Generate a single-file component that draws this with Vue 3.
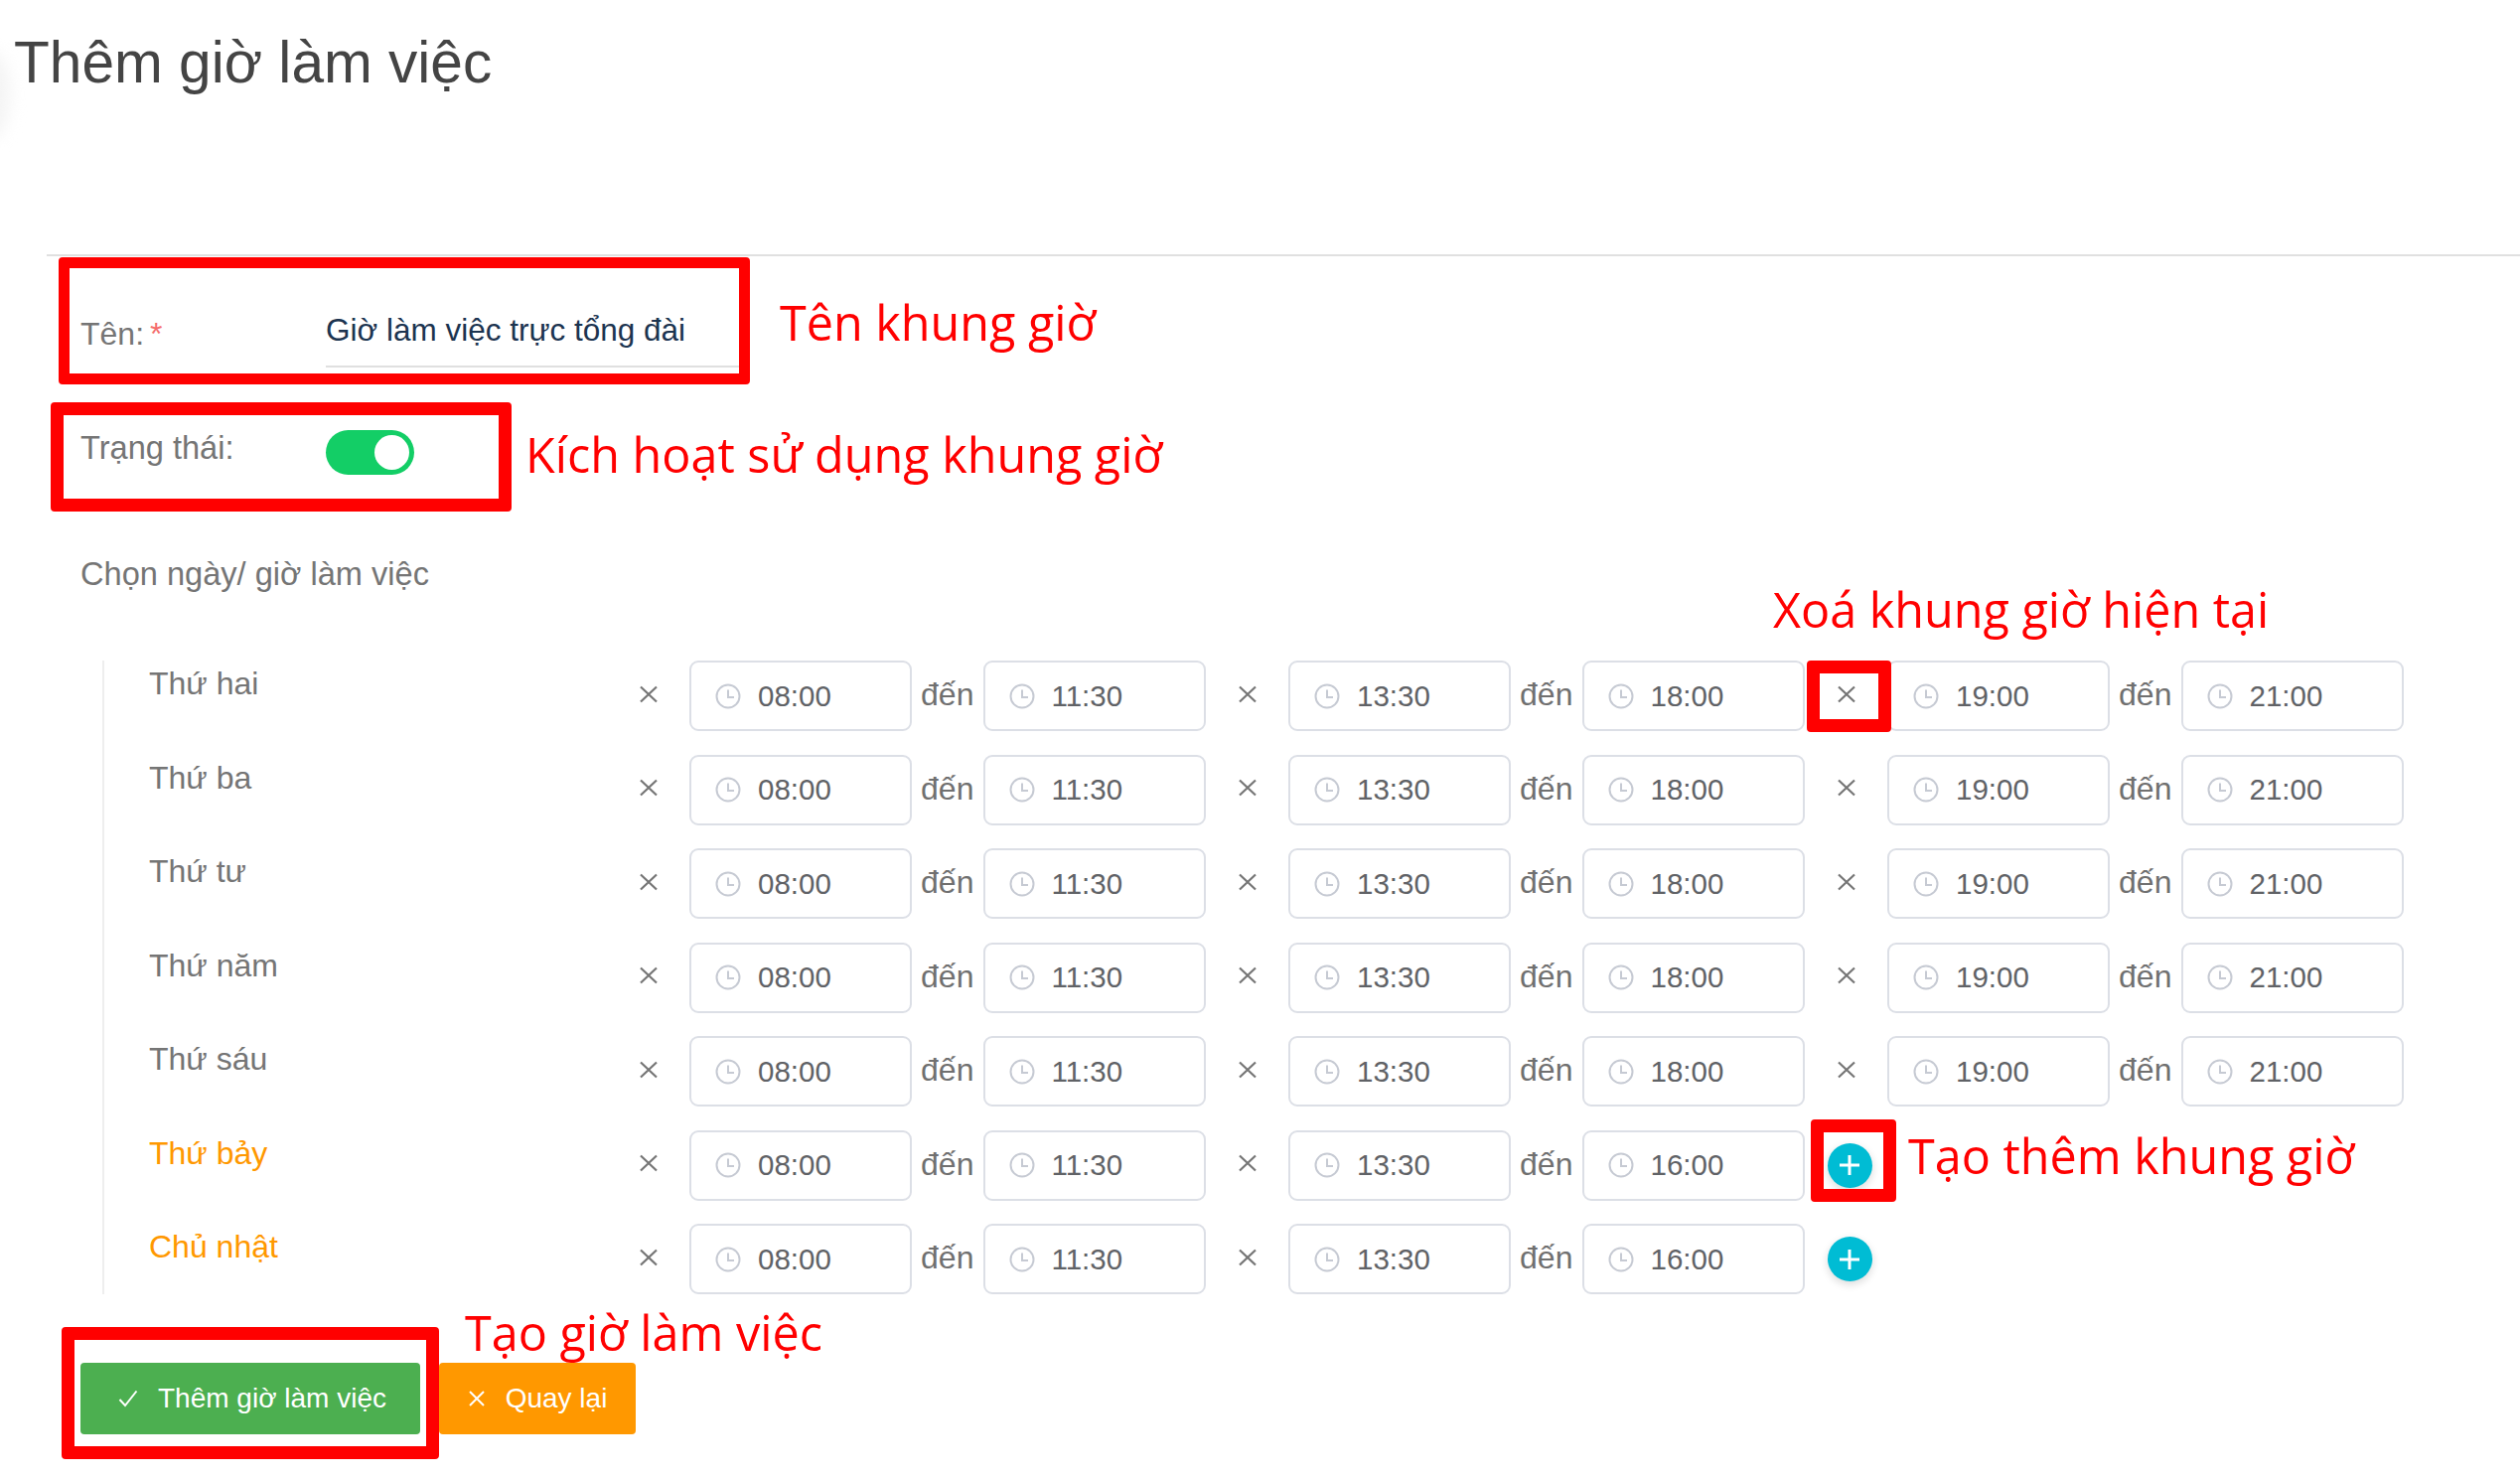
<script setup>
const morning = { from: "08:00", to: "11:30" };
const days = [
  { name: "Thứ hai", end: "18:00", evening: true },
  { name: "Thứ ba", end: "18:00", evening: true },
  { name: "Thứ tư", end: "18:00", evening: true },
  { name: "Thứ năm", end: "18:00", evening: true },
  { name: "Thứ sáu", end: "18:00", evening: true },
  { name: "Thứ bảy", end: "16:00", evening: false, weekend: true },
  { name: "Chủ nhật", end: "16:00", evening: false, weekend: true },
];

function slots(day) {
  const list = [morning, { from: "13:30", to: day.end }];
  if (day.evening) list.push({ from: "19:00", to: "21:00" });
  return list;
}
</script>

<template>
  <div class="page">
    <div class="edge-shade"></div>
    <h1 class="title">Thêm giờ làm việc</h1>
    <div class="divider"></div>

    <form class="form" @submit.prevent>
      <div class="name-row">
        <label class="name-label">Tên:<span class="req">*</span></label>
        <div class="name-input">Giờ làm việc trực tổng đài</div>
      </div>

      <div class="status-row">
        <label class="status-label">Trạng thái:</label>
        <span class="toggle"><span class="knob"></span></span>
      </div>

      <div class="section-label">Chọn ngày/ giờ làm việc</div>

      <div class="days">
        <div v-for="day in days" :key="day.name" class="day">
          <div class="day-name" :class="{ weekend: day.weekend }">{{ day.name }}</div>
          <div v-for="(slot, i) in slots(day)" :key="i" class="slot">
            <div class="remove">
              <svg width="20" height="18" viewBox="0 0 20 18"><path d="M2 1.5 18 16.5M18 1.5 2 16.5" fill="none" stroke="#757575" stroke-width="2.2" /></svg>
            </div>
            <div class="time">
              <svg class="clock" width="26" height="26" viewBox="0 0 26 26"><circle cx="13" cy="13" r="11.5" fill="none" stroke="#c6cad3" stroke-width="2" /><path d="M13 6.5V14H19" fill="none" stroke="#c6cad3" stroke-width="2" /></svg>
              <span>{{ slot.from }}</span>
            </div>
            <span class="to">đến</span>
            <div class="time">
              <svg class="clock" width="26" height="26" viewBox="0 0 26 26"><circle cx="13" cy="13" r="11.5" fill="none" stroke="#c6cad3" stroke-width="2" /><path d="M13 6.5V14H19" fill="none" stroke="#c6cad3" stroke-width="2" /></svg>
              <span>{{ slot.to }}</span>
            </div>
          </div>
          <div v-if="!day.evening" class="add-wrap">
            <button type="button" class="add" aria-label="Thêm">
              <svg width="22" height="22" viewBox="0 0 22 22"><path d="M11 1V21M1 11H21" fill="none" stroke="#fff" stroke-width="3" /></svg>
            </button>
          </div>
        </div>
      </div>

      <div class="actions">
        <button type="button" class="btn btn-green">
          <svg width="20" height="18" viewBox="0 0 20 18"><path d="M1.5 10 7 16 18.5 1.5" fill="none" stroke="#fff" stroke-width="2" /></svg>
          Thêm giờ làm việc
        </button>
        <button type="button" class="btn btn-orange">
          <svg width="18" height="18" viewBox="0 0 18 18"><path d="M2 2 16 16M16 2 2 16" fill="none" stroke="#fff" stroke-width="2" /></svg>
          Quay lại
        </button>
      </div>
    </form>

    <!-- red markup drawn on top of the screenshot -->
    <div class="frame f-name"></div>
    <div class="frame f-status"></div>
    <div class="frame f-remove"></div>
    <div class="frame f-add"></div>
    <div class="frame f-submit"></div>
    <div class="note n-name">Tên khung giờ</div>
    <div class="note n-status">Kích hoạt sử dụng khung giờ</div>
    <div class="note n-remove">Xoá khung giờ hiện tại</div>
    <div class="note n-add">Tạo thêm khung giờ</div>
    <div class="note n-submit">Tạo giờ làm việc</div>
  </div>
</template>

<style>
body {
  background: #fff;
}
</style>

<style scoped>
.page {
  position: relative;
  width: 2537px;
  height: 1488px;
  overflow: hidden;
  background: #fff;
  font-family: "Liberation Sans", Arial, sans-serif;
  font-size: 32px;
  color: #606266;
}

.edge-shade {
  position: absolute;
  left: -30px;
  top: 50px;
  width: 40px;
  height: 90px;
  border-radius: 50%;
  background: #f4f4f4;
  filter: blur(8px);
}

.title {
  margin: 0;
  height: 256px;
  padding: 28px 0 0 14px;
  box-sizing: border-box;
  font-size: 58.6px;
  font-weight: 400;
  line-height: 70px;
  color: #444;
}

.divider {
  height: 2px;
  margin-left: 47px;
  background: #e0e0e0;
}

.form {
  padding-left: 81px;
}

.name-row {
  display: flex;
  height: 147px;
}

.name-label {
  width: 247px;
  padding-top: 58px;
  line-height: 40px;
  color: #757575;
}

.req {
  margin-left: 6px;
  color: #f56c6c;
}

.name-input {
  width: 425px;
  height: 112px;
  box-sizing: border-box;
  padding-top: 54px;
  line-height: 40px;
  font-size: 31.5px;
  border-bottom: 2px solid #e0e0e0;
  color: #1c3450;
}

.status-row {
  display: flex;
  height: 139px;
}

.status-label {
  width: 247px;
  padding-top: 26px;
  line-height: 40px;
  font-size: 32.6px;
  color: #757575;
}

.toggle {
  display: block;
  position: relative;
  width: 89px;
  height: 45px;
  margin-top: 28px;
  border-radius: 23px;
  background: #13ce66;
}

.knob {
  position: absolute;
  top: 5px;
  right: 5px;
  width: 35px;
  height: 35px;
  border-radius: 50%;
  background: #fff;
}

.section-label {
  height: 121px;
  box-sizing: border-box;
  padding-top: 14px;
  line-height: 40px;
  font-size: 32.6px;
  color: #757575;
}

.days {
  margin-left: 22px;
  border-left: 2px solid #eee;
  width: max-content;
}

.day {
  display: flex;
  height: 71px;
  margin-bottom: 23.5px;
}

.day:last-child {
  margin-bottom: 0;
}

.day-name {
  width: 505.5px;
  padding-left: 45px;
  box-sizing: border-box;
  line-height: 47px;
  color: #757575;
}

.weekend {
  color: #ff9800;
}

.slot {
  display: flex;
  align-items: center;
}

.remove {
  display: flex;
  align-items: center;
  justify-content: center;
  width: 83.5px;
  height: 71px;
  padding: 0 0 4px 2px;
  box-sizing: border-box;
}

.time {
  display: flex;
  align-items: center;
  width: 224px;
  height: 71px;
  box-sizing: border-box;
  padding-left: 24px;
  border: 2px solid #dcdfe6;
  border-radius: 9px;
  font-size: 29.5px;
  color: #606266;
}

.clock {
  margin-right: 17px;
}

.to {
  width: 71.5px;
  padding-bottom: 2px;
  text-align: center;
  font-size: 32px;
  color: #707070;
}

.add-wrap {
  display: flex;
  align-items: center;
  padding-left: 23px;
  height: 71px;
}

.add {
  display: flex;
  align-items: center;
  justify-content: center;
  width: 45px;
  height: 45px;
  padding: 0;
  border: 0;
  border-radius: 50%;
  background: #00bcd4;
  box-shadow: 0 3px 8px rgba(0, 0, 0, 0.15);
}

.actions {
  display: flex;
  margin-top: 69px;
}

.btn {
  display: flex;
  align-items: center;
  justify-content: center;
  gap: 20px;
  height: 72px;
  border: 0;
  border-radius: 4px;
  font-family: inherit;
  font-size: 28px;
  color: #fff;
}

.btn-green {
  width: 342px;
  padding-left: 10px;
  background: #4caf50;
}

.btn-orange {
  width: 198px;
  margin-left: 19px;
  background: #ff9800;
}

.frame {
  position: absolute;
  box-sizing: border-box;
  border: 12px solid #ff0000;
  border-radius: 4px;
}

.f-name {
  left: 59px;
  top: 259px;
  width: 696px;
  height: 128px;
  border-width: 11px;
}

.f-status {
  left: 51px;
  top: 405px;
  width: 464px;
  height: 110px;
  border-width: 13px;
}

.f-remove {
  left: 1819px;
  top: 665px;
  width: 85px;
  height: 72px;
  border-width: 13px;
}

.f-add {
  left: 1823px;
  top: 1127px;
  width: 86px;
  height: 83px;
  border-width: 13px;
}

.f-submit {
  left: 62px;
  top: 1336px;
  width: 380px;
  height: 133px;
  border-width: 13px;
}

.note {
  position: absolute;
  font-family: "Open Sans", sans-serif;
  font-size: 48.5px;
  line-height: 60px;
  white-space: nowrap;
  color: #ff0000;
}

.n-name {
  left: 785px;
  top: 294px;
}

.n-status {
  left: 529px;
  top: 427px;
}

.n-remove {
  left: 1785px;
  top: 583px;
}

.n-add {
  left: 1921px;
  top: 1133px;
}

.n-submit {
  left: 468px;
  top: 1311px;
}
</style>
